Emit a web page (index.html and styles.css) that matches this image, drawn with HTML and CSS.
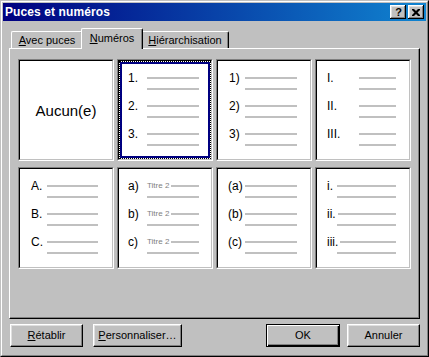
FILE: index.html
```html
<!DOCTYPE html>
<html lang="fr">
<head>
<meta charset="utf-8">
<title>Puces et numéros</title>
<link rel="stylesheet" href="styles.css">
</head>
<body>
<div class="window">
  <div class="frame">
    <div class="titlebar">
      <span class="title">Puces et numéros</span>
      <div class="tbtns">
        <span class="tbtn help">?</span>
        <span class="tbtn close"><svg width="8" height="7" viewBox="0 0 8 7"><path d="M0 0h2l2 2 2-2h2v1l-2.5 2.5 2.5 2.5v1h-2l-2-2-2 2h-2v-1l2.5-2.5-2.5-2.5z" fill="#000"/></svg></span>
      </div>
    </div>
    <div class="body">
      <div class="tabs">
        <div class="tab t1"><span><u>A</u>vec puces</span></div>
        <div class="tab t2 active"><span><u>N</u>uméros</span></div>
        <div class="tab t3"><span><u>H</u>iérarchisation</span></div>
      </div>
      <div class="panel">
        <div class="grid">
          <div class="cell"><div class="cin none">Aucun(e)</div></div>
          <div class="cell sel"><div class="cin"><div class="selin">
            <div class="list dec">
              <div class="item"><span class="num">1.</span><span class="ln"></span></div><div class="sub"></div>
              <div class="item"><span class="num">2.</span><span class="ln"></span></div><div class="sub"></div>
              <div class="item"><span class="num">3.</span><span class="ln"></span></div><div class="sub"></div>
            </div>
          </div></div></div>
          <div class="cell"><div class="cin">
            <div class="list paren">
              <div class="item"><span class="num">1)</span><span class="ln"></span></div><div class="sub"></div>
              <div class="item"><span class="num">2)</span><span class="ln"></span></div><div class="sub"></div>
              <div class="item"><span class="num">3)</span><span class="ln"></span></div><div class="sub"></div>
            </div>
          </div></div>
          <div class="cell"><div class="cin">
            <div class="list roman">
              <div class="item"><span class="num">I.</span><span class="ln"></span></div><div class="sub"></div>
              <div class="item"><span class="num">II.</span><span class="ln"></span></div><div class="sub"></div>
              <div class="item"><span class="num">III.</span><span class="ln"></span></div><div class="sub"></div>
            </div>
          </div></div>
          <div class="cell"><div class="cin">
            <div class="list alpha">
              <div class="item"><span class="num">A.</span><span class="ln"></span></div><div class="sub"></div>
              <div class="item"><span class="num">B.</span><span class="ln"></span></div><div class="sub"></div>
              <div class="item"><span class="num">C.</span><span class="ln"></span></div><div class="sub"></div>
            </div>
          </div></div>
          <div class="cell"><div class="cin">
            <div class="list titre">
              <div class="item"><span class="num">a)</span><span class="tt">Titre 2</span><span class="ln"></span></div><div class="sub"></div>
              <div class="item"><span class="num">b)</span><span class="tt">Titre 2</span><span class="ln"></span></div><div class="sub"></div>
              <div class="item"><span class="num">c)</span><span class="tt">Titre 2</span><span class="ln"></span></div><div class="sub"></div>
            </div>
          </div></div>
          <div class="cell"><div class="cin">
            <div class="list palpha">
              <div class="item"><span class="num">(a)</span><span class="ln"></span></div><div class="sub"></div>
              <div class="item"><span class="num">(b)</span><span class="ln"></span></div><div class="sub"></div>
              <div class="item"><span class="num">(c)</span><span class="ln"></span></div><div class="sub"></div>
            </div>
          </div></div>
          <div class="cell"><div class="cin">
            <div class="list lroman">
              <div class="item"><span class="num">i.</span><span class="ln"></span></div><div class="sub"></div>
              <div class="item"><span class="num">ii.</span><span class="ln"></span></div><div class="sub"></div>
              <div class="item"><span class="num">iii.</span><span class="ln"></span></div><div class="sub"></div>
            </div>
          </div></div>
        </div>
      </div>
      <div class="buttons">
        <div class="group left">
          <div class="btn w-ret"><span><u>R</u>établir</span></div>
          <div class="btn w-pers"><span><u>P</u>ersonnaliser…</span></div>
        </div>
        <div class="group right">
          <div class="btn def w-ok"><span>OK</span></div>
          <div class="btn w-ann"><span>Annuler</span></div>
        </div>
      </div>
    </div>
  </div>
</div>
</body>
</html>
```

FILE: styles.css
```css
* { box-sizing: border-box; margin: 0; padding: 0; }
html, body { width: 429px; height: 357px; overflow: hidden; background: #c0c0c0; }
body { font-family: "Liberation Sans", Arial, sans-serif; font-size: 11px; color: #000; }

.window {
  width: 429px; height: 357px; background: #c0c0c0;
  border: 1px solid; border-color: #c0c0c0 #000 #000 #c0c0c0;
}
.frame {
  height: 100%;
  border: 1px solid; border-color: #fff #808080 #808080 #fff;
  padding: 1px;
  display: flex; flex-direction: column;
}
.titlebar {
  height: 18px; flex: 0 0 18px;
  background: linear-gradient(to right, #000080, #1084d0);
  display: flex; align-items: center; justify-content: space-between;
  padding: 0 2px;
}
.title { color: #fff; font-weight: bold; font-size: 12px; line-height: 18px; letter-spacing: 0.1px; }
.tbtns { display: flex; gap: 2px; }
.tbtn {
  width: 16px; height: 14px; background: #c0c0c0;
  box-shadow: inset -1px -1px #000, inset 1px 1px #fff, inset -2px -2px #808080, inset 2px 2px #dfdfdf;
  display: flex; align-items: center; justify-content: center;
}
.tbtn.help { font-weight: bold; font-size: 11px; line-height: 14px; padding-left: 1px; }
.tbtn svg { display: block; }

.body { flex: 1; padding: 7px 6px 0 6px; display: flex; flex-direction: column; }

.tabs { display: flex; align-items: flex-end; height: 20px; padding-left: 2px; }
.tab {
  height: 17px; background: #c0c0c0;
  border-top: 1px solid #fff; border-left: 1px solid #fff; border-right: 1px solid #000;
  box-shadow: inset -1px 0 #808080;
  border-radius: 2px 2px 0 0;
  display: flex; justify-content: center; padding-top: 2px;
  line-height: 13px; position: relative;
}
.t1 { width: 72px; }
.t3 { width: 88px; }
.tab.active {
  width: 62px; height: 21px; margin: 0 -2px -1px -2px; z-index: 2; padding-top: 3px;
}

.panel {
  height: 271px;
  border: 1px solid; border-color: #fff #000 #000 #fff;
  box-shadow: inset -1px -1px #808080;
  padding: 10px 7px 0 8px;
}
.grid {
  display: grid;
  grid-template-columns: repeat(4, 96px);
  grid-template-rows: 102px 102px;
  column-gap: 3px; row-gap: 6px;
}
.cell {
  background: #fff;
  border: 1px solid; border-color: #808080 #fff #fff #808080;
}
.cin {
  height: 100%;
  border: 1px solid; border-color: #000 #c0c0c0 #c0c0c0 #000;
  padding-top: 10px;
}
.cin.none {
  padding-top: 0; display: flex; align-items: center; justify-content: center;
  font-size: 15px;
}
.sel .cin { padding-top: 0; }
.selin {
  height: 100%;
  border: 1px dotted #000;
  box-shadow: inset 0 0 0 2px #000080;
  padding-top: 9px;
}
.sel .list { margin-left: calc(var(--p) - 3px); }

.list {
  --p: 11px; --e: 81px; --nw: 16px;
  margin-left: calc(var(--p) - 2px);
  width: calc(var(--e) - var(--p));
  font-size: 12px;
}
.item { display: flex; align-items: center; height: 14px; line-height: 14px; }
.num { flex: 0 0 auto; min-width: var(--nw); padding-right: 2px; white-space: nowrap; }
.ln, .sub { height: 2px; background: #c0c0c0; }
.ln { flex: 1; }
.sub { margin: 3px 0 9px var(--nw); }
.tt { font-size: 8px; color: #808080; flex: 0 0 auto; padding-right: 2px; }

.dec { --p: 11px; --e: 82px; --nw: 19px; }
.paren { --p: 13px; --e: 81px; --nw: 16px; }
.roman { --p: 12px; --e: 81px; --nw: 32px; }
.alpha { --p: 13px; --e: 80px; --nw: 16px; }
.titre { --p: 11px; --e: 82px; --nw: 19px; }
.palpha { --p: 12px; --e: 81px; --nw: 17px; }
.lroman { --p: 12px; --e: 81px; --nw: 10px; }

.buttons { display: flex; justify-content: space-between; margin-top: 5px; padding-left: 1px; }
.group { display: flex; }
.group.left { gap: 10px; }
.group.right { gap: 7px; }
.btn {
  height: 23px; background: #c0c0c0;
  border: 1px solid; border-color: #fff #000 #000 #fff;
  box-shadow: inset -1px -1px #808080, inset 1px 1px #dfdfdf;
  display: flex; align-items: center; justify-content: center;
  line-height: 13px;
}
.btn.def {
  border-color: #000;
  box-shadow: inset 1px 1px #fff, inset -1px -1px #000, inset -2px -2px #808080;
}
.w-ret { width: 73px; }
.w-pers { width: 89px; }
.w-ok { width: 74px; }
.w-ann { width: 73px; }
```
